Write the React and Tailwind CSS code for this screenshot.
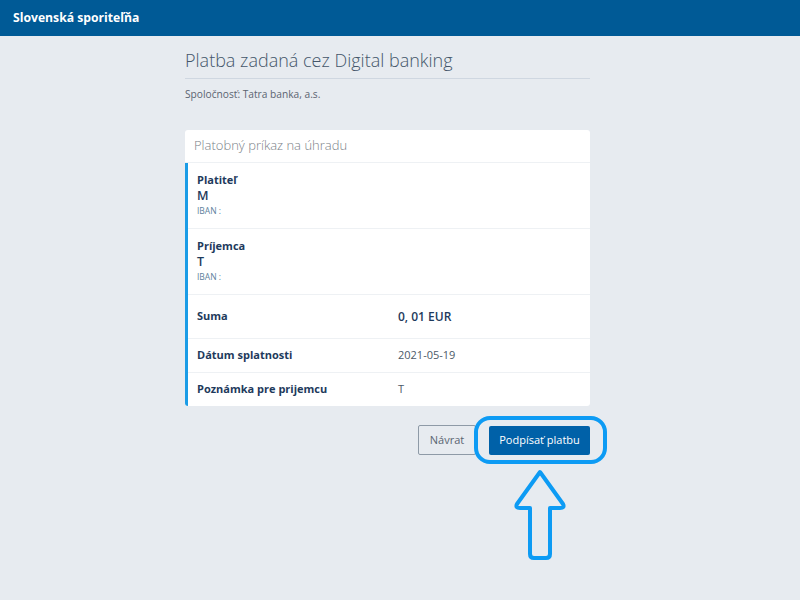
export default function App() {
  const font = { fontFamily: '"Open Sans", "Noto Sans", sans-serif' };
  return (
    <div style={font} className="w-[800px] h-[600px] bg-[#e7ebf0] relative overflow-hidden">
      <div className="h-9 bg-[#005a96] flex items-center pl-[13px]">
        <span className="text-white font-bold text-[12.2px]">Slovenská sporiteľňa</span>
      </div>
      <div className="pl-[185px] w-[590px] box-content">
        <div className="w-[405px]">
          <div className="pt-[11px] pb-[5px] border-b border-[#cfd7e1]">
            <h1 className="text-[18px] font-light text-[#44566a] leading-[26px]">Platba zadaná cez Digital banking</h1>
          </div>
          <div className="text-[10.2px] text-[#5b6470] mt-[8px] leading-[15px]">Spoločnosť: Tatra banka, a.s.</div>

          <div className="mt-[28px] bg-white rounded-[3px] overflow-hidden">
            <div className="h-[33px] flex items-center pl-[9px] border-b border-[#eef1f4] text-[13px] font-light text-[#7a7f88]">Platobný príkaz na úhradu</div>
            <div className="border-l-[3px] border-[#1b9ce6]">
              <div className="h-[66px] pl-[9px] pt-[9px] border-b border-[#eef1f4] flex flex-col">
                <span className="text-[11px] font-bold text-[#1e3a5c] leading-[15px]">Platiteľ</span>
                <span className="text-[12.5px] font-semibold text-[#1e3a5c] leading-[17px]">M</span>
                <span className="text-[8.5px] text-[#5e7f9c] leading-[14px]">IBAN :</span>
              </div>
              <div className="h-[66px] pl-[9px] pt-[9px] border-b border-[#eef1f4] flex flex-col">
                <span className="text-[11px] font-bold text-[#1e3a5c] leading-[15px]">Príjemca</span>
                <span className="text-[12.5px] font-semibold text-[#1e3a5c] leading-[17px]">T</span>
                <span className="text-[8.5px] text-[#5e7f9c] leading-[14px]">IBAN :</span>
              </div>
              <div className="h-[44px] pl-[9px] border-b border-[#eef1f4] flex items-center">
                <span className="w-[201px] text-[11px] font-bold text-[#1e3a5c]">Suma</span>
                <span className="text-[12px] font-semibold text-[#1e3a5c]">0, 01 EUR</span>
              </div>
              <div className="h-[34px] pl-[9px] border-b border-[#eef1f4] flex items-center">
                <span className="w-[201px] text-[11px] font-bold text-[#1e3a5c]">Dátum splatnosti</span>
                <span className="text-[11px] text-[#4c5a68]">2021-05-19</span>
              </div>
              <div className="h-[33px] pl-[9px] flex items-center">
                <span className="w-[201px] text-[11px] font-bold text-[#1e3a5c]">Poznámka pre prijemcu</span>
                <span className="text-[11px] text-[#4c5a68]">T</span>
              </div>
            </div>
          </div>

          <div className="mt-[19px] flex justify-end items-center gap-[13px]">
            <button className="w-[58px] h-[30px] border border-[#8e9aa7] rounded-[2px] text-[11px] text-[#5a6572] bg-transparent">Návrat</button>
            <div className="relative">
              <div className="absolute left-[-15px] top-[-10px] w-[133px] h-[48px] border-[4px] border-[#0d9bf4] rounded-[16px]"></div>
              <button className="relative w-[101px] h-[29px] bg-[#0061a8] rounded-[2px] text-[11px] text-white">Podpísať platbu</button>
            </div>
          </div>
        </div>
      </div>
      <svg className="absolute left-[512px] top-[466px]" width="56" height="96" viewBox="0 0 56 96">
        <path d="M28 6 L51 38 Q53 42 48 42 L38 42 L38 88 Q38 92 34 92 L22 92 Q18 92 18 88 L18 42 L8 42 Q3 42 5 38 Z" fill="none" stroke="#0d9bf4" strokeWidth="4" strokeLinejoin="round" />
      </svg>
    </div>
  );
}
